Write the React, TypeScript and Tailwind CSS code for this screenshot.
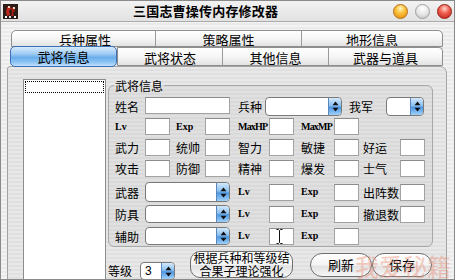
import React from "react";

function Box({ cls = "w-[25px] h-[17px]", children }: { cls?: string; children?: React.ReactNode }) {
  return (
    <div className={`bg-white border border-[#a2a2a2] border-t-[#8c8c8c] flex items-center ${cls}`}>{children}</div>
  );
}

function Sel({ cls, value }: { cls: string; value?: string }) {
  return (
    <div className={`flex bg-white border border-[#7a7a7a] rounded-[4px] overflow-hidden ${cls}`}>
      <div className="flex-1 pl-[4px] text-[12px] leading-none flex items-center font-['Liberation_Sans',sans-serif]">{value}</div>
      <div className="w-[13px] bg-[linear-gradient(180deg,#d4e8fb_0%,#8cc0f0_45%,#4f97e2_55%,#9fd0f8_100%)] border-l border-[#5a86be] rounded-r-[3px] flex items-center justify-center">
        <svg width="7" height="11" viewBox="0 0 7 11">
          <path d="M3.5 0.5 L6.5 4.2 H0.5Z M0.5 6.8 H6.5 L3.5 10.5Z" fill="#111" />
        </svg>
      </div>
    </div>
  );
}

function Zh({ cls, children }: { cls: string; children: React.ReactNode }) {
  return <div className={`text-[12px] leading-[13px] whitespace-nowrap ${cls}`}>{children}</div>;
}

function As({ cls, children }: { cls: string; children: React.ReactNode }) {
  return (
    <div className={`font-['Liberation_Serif',serif] font-bold text-[10px] leading-[12px] whitespace-nowrap ${cls}`}>{children}</div>
  );
}

function Light({ cls }: { cls: string }) {
  return <div className={`w-[15px] h-[15px] rounded-full border ${cls}`} />;
}

export default function App() {
  return (
    <div className="w-[455px] h-[280px] overflow-hidden relative flex flex-col border border-[#8a8a8a] bg-[repeating-linear-gradient(180deg,#f3f3f3_0px,#f3f3f3_2px,#eaeaea_2px,#eaeaea_4px)] font-['Noto_Sans_CJK_SC','Liberation_Sans',sans-serif] text-black">
      {/* title bar */}
      <div className="h-[21px] shrink-0 flex items-center border-b border-[#a9a9a9] bg-[linear-gradient(180deg,#f2f2f2,#e2e2e2)]">
        <div className="ml-[2px] w-[15px] h-[15px]">
          <svg width="15" height="15" viewBox="0 0 15 15">
            <rect width="15" height="15" fill="#2a1c16" />
            <path d="M4 3 L7 2 L8 5 L6 7 L7 11 L4 12 L3 8Z" fill="#c0281c" />
            <path d="M8 4 L11 3 L12 7 L10 9 L11 12 L8 12 L9 8Z" fill="#a81e14" />
            <rect x="5" y="2" width="2" height="2" fill="#f0d8c0" />
            <rect x="10" y="3" width="2" height="2" fill="#f0d8c0" />
            <rect x="2" y="12" width="2" height="2" fill="#ffffff" />
            <rect x="6" y="12" width="2" height="2" fill="#e0e0e0" />
            <rect x="11" y="12" width="2" height="2" fill="#ffffff" />
          </svg>
        </div>
        <div className="ml-[115px] text-[13px] font-bold leading-[14px] tracking-[0.2px]">三国志曹操传内存修改器</div>
        <div className="ml-auto mr-[2px] flex gap-[7px]">
          <Light cls="bg-[radial-gradient(circle_at_50%_28%,#fff6cc_0%,#fbc23c_40%,#e0860c_100%)] border-[#b86d10]" />
          <Light cls="bg-[radial-gradient(circle_at_50%_28%,#ffffff_0%,#e8e8e8_50%,#bdbdbd_100%)] border-[#a0a0a0]" />
          <Light cls="bg-[radial-gradient(circle_at_50%_28%,#ffd6cc_0%,#f06050_42%,#b81e14_100%)] border-[#9a1c12]" />
        </div>
      </div>

      {/* tabs */}
      <div className="ml-[9px] mt-[8px] w-[433px] shrink-0">
        <div className="ml-[1px] w-[432px] h-[17px] flex border border-[#8e8e8e] rounded-t-[5px] overflow-hidden bg-[linear-gradient(180deg,#ffffff_0%,#f6f6f6_50%,#e3e3e3_100%)] text-[13px] leading-[14px]">
          <div className="w-[143px] pt-[2px] pl-[3px] text-center">兵种属性</div>
          <div className="w-[146px] border-l border-[#9a9a9a] pt-[2px] text-center">策略属性</div>
          <div className="w-[141px] border-l border-[#9a9a9a] pt-[2px] text-center">地形信息</div>
        </div>
        <div className="flex h-[19px] text-[13px] leading-[14px]">
          <div className="relative z-10 w-[107px] h-[21px] -mt-[1px] shrink-0 rounded-[5px] border border-[#3d6fb4] bg-[linear-gradient(180deg,#d6eafc_0%,#a2cdf4_35%,#6aaeea_55%,#8cc4f3_80%,#bfe0fb_100%)] pt-[3px] text-center">
            武将信息
          </div>
          <div className="w-[326px] flex border border-[#8e8e8e] rounded-tr-[4px] overflow-hidden bg-[linear-gradient(180deg,#ffffff_0%,#f6f6f6_50%,#e3e3e3_100%)]">
            <div className="w-[104px] pt-[3px] text-center">武将状态</div>
            <div className="w-[106px] border-l border-[#9a9a9a] pt-[3px] text-center">其他信息</div>
            <div className="w-[114px] border-l border-[#9a9a9a] pt-[3px] text-center">武器与道具</div>
          </div>
        </div>
      </div>

      {/* panel */}
      <div className="ml-[6px] w-[440px] h-[230px] shrink-0 flex pt-[12px] pl-[15px] border border-[#a4a4a4] rounded-tl-[3px] rounded-tr-[7px] bg-[repeating-linear-gradient(180deg,#e8e8e8_0px,#e8e8e8_2px,#e0e0e0_2px,#e0e0e0_4px)]">
        <div className="w-[83px] h-[205px] shrink-0 bg-white border border-[#8c8c8c] p-[1px]">
          <div className="h-[12px] border border-dotted border-black" />
        </div>

        <div className="ml-[2px] w-[325px] flex flex-col">
          <fieldset className="border border-[#a8a8a8] rounded-[6px] bg-black/[0.03] px-[6px] pt-[5px] pb-[1px]">
            <legend className="ml-[-1px] px-[1px] text-[12px] leading-[13px]">武将信息</legend>

            {/* row 1 */}
            <div className="flex items-center h-[19px]">
              <Zh cls="w-[30px]">姓名</Zh>
              <Box cls="w-[85px] h-[17px] self-start" />
              <Zh cls="ml-[8px] w-[27px]">兵种</Zh>
              <Sel cls="w-[77px] h-[19px]" />
              <Zh cls="ml-[7px] w-[37px]">我军</Zh>
              <Sel cls="w-[38px] h-[19px]" />
            </div>

            {/* row 2 */}
            <div className="flex items-center h-[17px] mt-[2px]">
              <As cls="w-[30px]">Lv</As>
              <Box />
              <As cls="ml-[6px] w-[29px]">Exp</As>
              <Box />
              <As cls="ml-[8px] w-[31px] tracking-[-0.8px]">MaxHP</As>
              <Box />
              <As cls="ml-[7px] w-[33px] tracking-[-0.8px]">MaxMP</As>
              <Box />
            </div>

            {/* row 3 */}
            <div className="flex items-center h-[17px] mt-[4px]">
              <Zh cls="w-[30px]">武力</Zh>
              <Box />
              <Zh cls="ml-[6px] w-[29px]">统帅</Zh>
              <Box />
              <Zh cls="ml-[8px] w-[31px]">智力</Zh>
              <Box />
              <Zh cls="ml-[7px] w-[33px]">敏捷</Zh>
              <Box />
              <Zh cls="ml-[4px] w-[37px]">好运</Zh>
              <Box />
            </div>

            {/* row 4 */}
            <div className="flex items-center h-[17px] mt-[4px]">
              <Zh cls="w-[30px]">攻击</Zh>
              <Box />
              <Zh cls="ml-[6px] w-[29px]">防御</Zh>
              <Box />
              <Zh cls="ml-[8px] w-[31px]">精神</Zh>
              <Box />
              <Zh cls="ml-[7px] w-[33px]">爆发</Zh>
              <Box />
              <Zh cls="ml-[4px] w-[37px]">士气</Zh>
              <Box />
            </div>

            {/* row 5 */}
            <div className="flex items-center h-[20px] mt-[5px]">
              <Zh cls="w-[30px]">武器</Zh>
              <Sel cls="w-[85px] h-[20px]" />
              <As cls="ml-[8px] w-[31px]">Lv</As>
              <Box />
              <As cls="ml-[7px] w-[33px]">Exp</As>
              <Box />
              <Zh cls="ml-[4px] w-[37px]">出阵数</Zh>
              <Box />
            </div>

            {/* row 6 */}
            <div className="flex items-center h-[18px] mt-[3px]">
              <Zh cls="w-[30px]">防具</Zh>
              <Sel cls="w-[85px] h-[18px]" />
              <As cls="ml-[8px] w-[31px]">Lv</As>
              <Box />
              <As cls="ml-[7px] w-[33px]">Exp</As>
              <Box />
              <Zh cls="ml-[4px] w-[37px]">撤退数</Zh>
              <Box />
            </div>

            {/* row 7 */}
            <div className="flex items-center h-[18px] mt-[4px]">
              <Zh cls="w-[30px]">辅助</Zh>
              <Sel cls="w-[85px] h-[18px]" />
              <As cls="ml-[8px] w-[31px]">Lv</As>
              <Box>
                <svg className="ml-[6px]" width="7" height="15" viewBox="0 0 7 15">
                  <path d="M0.5 0.5 H2.5 L3.5 1.5 L4.5 0.5 H6.5 M3.5 1.5 V13.5 M0.5 14.5 H2.5 L3.5 13.5 L4.5 14.5 H6.5" stroke="#111" strokeWidth="1" fill="none" />
                </svg>
              </Box>
              <As cls="ml-[7px] w-[33px]">Exp</As>
              <Box />
            </div>
          </fieldset>

          {/* bottom controls */}
          <div className="flex items-start mt-[4px]">
            <Zh cls="w-[32px] mt-[13px]">等级</Zh>
            <Sel cls="w-[35px] h-[18px] mt-[11px]" value="3" />
            <div className="ml-[15px] w-[103px] h-[27px] rounded-[10px] border border-[#6e6e6e] bg-[linear-gradient(180deg,#ffffff_0%,#f4f4f4_50%,#e2e2e2_55%,#f6f6f6_100%)] flex flex-col items-center justify-center text-[12px] leading-[12.5px] whitespace-nowrap">
              <span>根据兵种和等级结</span>
              <span>合果子理论强化</span>
            </div>
            <div className="ml-[17px] w-[62px] h-[24px] mt-[2px] rounded-full border border-[#6e6e6e] bg-[linear-gradient(180deg,#ffffff_0%,#f4f4f4_50%,#e2e2e2_55%,#f6f6f6_100%)] flex items-center justify-center text-[13px] leading-[14px]">
              刷新
            </div>
            <div className="w-[60px] h-[24px] mt-[2px] rounded-full border border-[#6e6e6e] bg-[linear-gradient(180deg,#ffffff_0%,#f4f4f4_50%,#e2e2e2_55%,#f6f6f6_100%)] flex items-center justify-center text-[13px] leading-[14px]">
              保存
            </div>
          </div>
        </div>
      </div>

      {/* watermark */}
      <div className="absolute left-[354px] top-[252px] text-[24px] leading-[26px] text-[#ec8f78] opacity-45 pointer-events-none whitespace-nowrap">
        我爱秘籍
      </div>
    </div>
  );
}
